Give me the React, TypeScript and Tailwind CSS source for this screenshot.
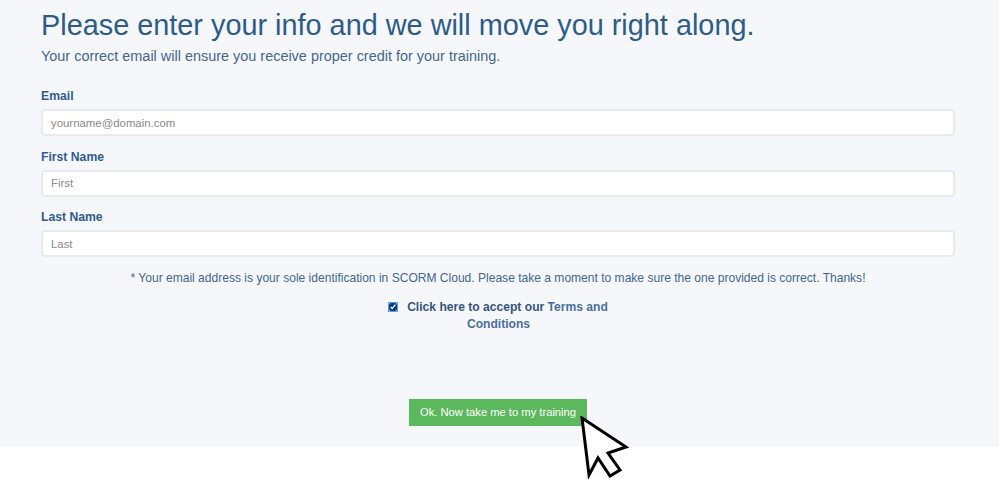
import React from 'react';

const fields = [
  { label: 'Email', placeholder: 'yourname@domain.com' },
  { label: 'First Name', placeholder: 'First' },
  { label: 'Last Name', placeholder: 'Last' },
];

function Cursor() {
  return (
    <svg className="absolute left-[171px] top-[17px]" width="50" height="63" viewBox="0 0 50 63">
      <path d="M2 2 L46 31 L28 37 L40 54 L30 60 L18 42 L9 59 Z" fill="#fff" stroke="#000" strokeWidth="3" strokeLinejoin="miter" />
    </svg>
  );
}

export default function App() {
  return (
    <div className="min-h-[482px] bg-white font-['Liberation_Sans',Arial,sans-serif]">
      <div className="h-[447px] bg-[#f5f7fa] px-[41px] text-[#2c5a8c]">
        <div className="w-[914px]">
          <h1 className="pt-[9px] text-[28.85px] leading-[33px] font-normal text-[#2b5c8c]">
            Please enter your info and we will move you right along.
          </h1>
          <p className="mt-[4px] text-[14.45px] leading-[20px] text-[#436791]">
            Your correct email will ensure you receive proper credit for your training.
          </p>
          <form className="mt-[20px]">
            <div className="flex flex-col gap-[10.5px]">
              {fields.map((f) => (
                <div key={f.label}>
                  <label className="mb-[1.5px] block text-[12.2px] leading-[21.5px] font-bold text-[#305d8e]">{f.label}</label>
                  <input
                    readOnly
                    placeholder={f.placeholder}
                    className="block h-[27px] w-full rounded-[4px] border-2 border-[#e8eaed] bg-white px-[8px] text-[11.4px] text-[#555] placeholder:text-[#8a8a8a]"
                  />
                </div>
              ))}
            </div>
            <p className="mt-[12.5px] text-center text-[12.05px] leading-[17px] text-[#436791]">
              * Your email address is your sole identification in SCORM Cloud. Please take a moment to make sure the one provided is correct. Thanks!
            </p>
            <p className="mx-auto mt-[12.5px] w-[240px] pl-[1px] text-center text-[12.1px] leading-[17px] font-bold text-[#335580]">
              <input
                readOnly
                type="checkbox"
                checked
                className="relative -top-[1px] mr-[10px] inline-block h-[8px] w-[8px] align-middle ring-1 ring-[#5aa0e8] accent-[#0a3a80]"
              />
              Click here to accept our <a className="text-[#4a6f9f]">Terms and Conditions</a>
            </p>
            <div className="mt-[66px] flex justify-center">
              <div className="relative">
                <button type="button" className="block h-[27px] w-[178px] bg-[#5cb85c] text-center text-[11.2px] text-white">
                  Ok. Now take me to my training
                </button>
                <Cursor />
              </div>
            </div>
          </form>
        </div>
      </div>
    </div>
  );
}
